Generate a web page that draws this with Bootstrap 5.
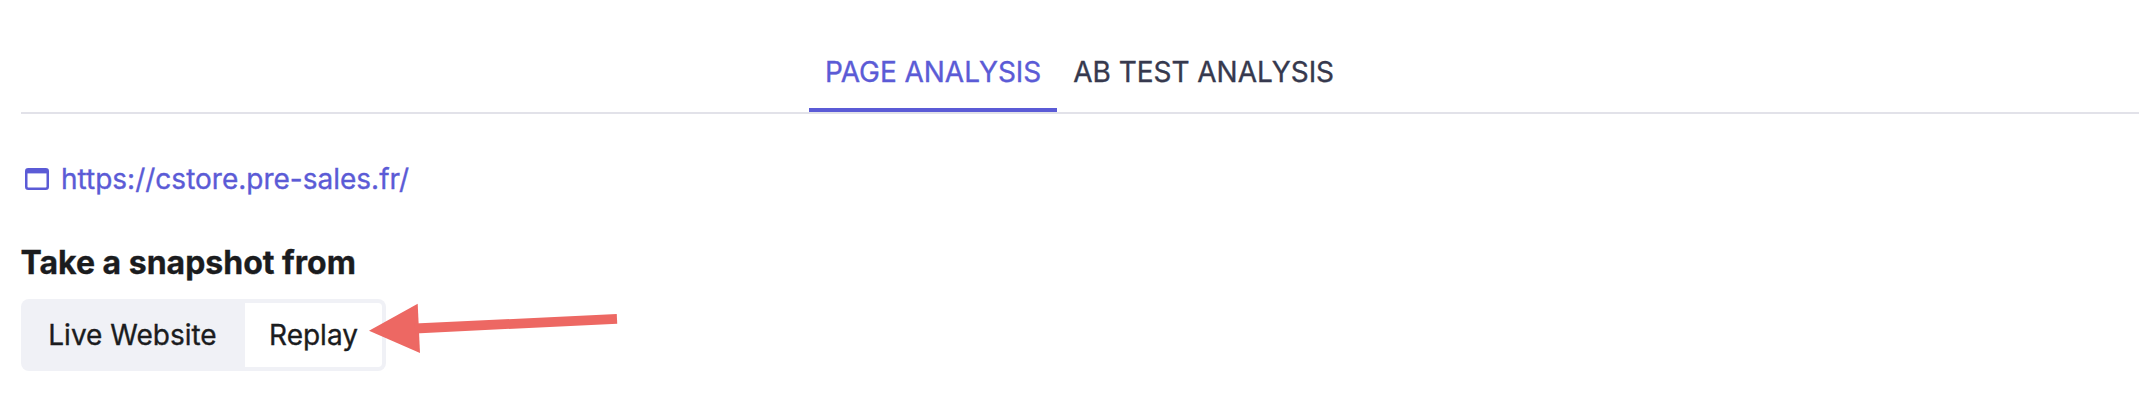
<!DOCTYPE html>
<html lang="en"><head><meta charset="utf-8"><title>Page analysis</title>
<link href="https://cdn.jsdelivr.net/npm/bootstrap@5.3.0/dist/css/bootstrap.min.css" rel="stylesheet">
<style>
body{font-family:Inter,sans-serif;font-size:28px;line-height:34px;color:#1b1c1e;background:#fff;height:414px;overflow:hidden;-webkit-text-stroke:.35px currentColor}
.page{padding:32px 7px 0 21px}
.tabs-row{height:82px;border-bottom:2px solid #e2e2e9;padding-right:1px}
.tabs-row .nav-link{padding:23px 16px 0;height:80px;color:#36394e;letter-spacing:-.04px;border-bottom:4px solid transparent}
.tabs-row .nav-link.active{color:#5b5bd6;border-color:#5b5bd6}
.site-link{color:#5b5bd6;margin-top:48px;padding-left:4px;gap:12px}
.heading{font-size:32px;line-height:40px;font-weight:700;margin:47px 0 16px -.5px}
.switcher{background:#f0f1f6;border-radius:8px;padding:4px;height:72px;width:365px}
.switcher .btn{font-size:28px;line-height:34px;border:0;border-radius:0;color:#1b1c1e;padding:0;width:137px}
.switcher .btn:first-child{width:220px;padding-right:5px}
.switcher .active{background:#fff;border-radius:0 4px 4px 0}
.arrow{left:368px;top:300px}
</style></head><body>
<main class="page">
<nav class="nav tabs-row justify-content-center"><a class="nav-link active" href="#">PAGE ANALYSIS</a><a class="nav-link" href="#">AB TEST ANALYSIS</a></nav>
<a href="#" class="site-link d-flex align-items-center text-decoration-none"><svg width="24" height="22" viewBox="0 0 24 22" fill="none"><rect x="1.25" y="1.25" width="21.5" height="19.5" rx="2" stroke="currentColor" stroke-width="2.5"/><path d="M2 3.2h20" stroke="currentColor" stroke-width="4.4"/></svg><span>https://cstore.pre-sales.fr/</span></a>
<h1 class="heading">Take a snapshot from</h1>
<div class="switcher d-flex"><button class="btn">Live Website</button><button class="btn active">Replay</button></div>
</main>
<svg class="arrow position-absolute" width="252" height="56" viewBox="368 300 252 56"><path d="M369 330.7L417.7 303.7 420 353Z" fill="#ed6863"/><path d="M415 328.5L617 318.8" stroke="#ed6863" stroke-width="9.8"/></svg>
<script src="https://cdn.jsdelivr.net/npm/bootstrap@5.3.0/dist/js/bootstrap.bundle.min.js"></script>
</body></html>
